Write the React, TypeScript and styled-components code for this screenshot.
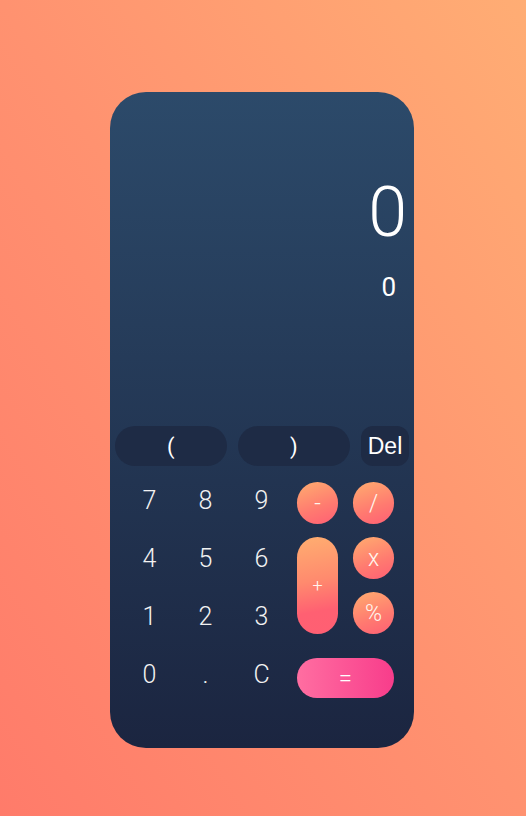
import React from "react";
import styled, { createGlobalStyle } from "styled-components";

const GlobalStyle = createGlobalStyle`
  html, body {
    margin: 0;
    padding: 0;
    height: 100%;
  }
  body {
    font-family: Roboto, "Liberation Sans", sans-serif;
    background: linear-gradient(to top right, #ff7b6a 0%, #ff9270 50%, #ffad74 100%);
  }
  #root {
    min-height: 100%;
  }
`;

const Page = styled.main`
  min-height: 816px;
  display: flex;
  justify-content: center;
  align-items: flex-start;
  padding-top: 92px;
  box-sizing: border-box;
`;

const Card = styled.div`
  width: 304px;
  height: 656px;
  margin-left: -2px;
  border-radius: 36px;
  background: linear-gradient(to bottom, #2c4a6a 0%, #1b2540 100%);
  display: flex;
  flex-direction: column;
  padding: 0 5px;
  box-sizing: border-box;
`;

const Display = styled.section`
  height: 334px;
  display: flex;
  flex-direction: column;
  align-items: flex-end;
  padding-top: 80px;
  box-sizing: border-box;
  color: #fff;
`;

const Result = styled.div`
  font-size: 70px;
  font-weight: 300;
  line-height: 80px;
  margin-right: 2px;
`;

const Expression = styled.div`
  font-size: 26px;
  font-weight: 400;
  line-height: 30px;
  margin-top: 20px;
  margin-right: 13px;
`;

const ParenRow = styled.div`
  display: flex;
  gap: 11.5px;
  height: 40px;
`;

const DarkButton = styled.button<{ $wide?: boolean }>`
  flex: ${(p) => (p.$wide ? "0 0 111.5px" : "0 0 48px")};
  height: 40px;
  border: none;
  border-radius: ${(p) => (p.$wide ? "20px" : "12px")};
  background: #1e2b45;
  color: #fff;
  font-family: ${(p) => (p.$wide ? "Roboto, sans-serif" : '"Liberation Sans", Arial, sans-serif')};
  font-weight: 400;
  font-size: ${(p) => (p.$wide ? "22px" : "23px")};
  padding: 0;
  display: flex;
  align-items: center;
  justify-content: center;
`;

const Keypad = styled.div`
  display: flex;
  gap: 15px;
  margin: 16px 0 0 14px;
`;

const DigitGrid = styled.div`
  display: grid;
  grid-template-columns: repeat(3, 41px);
  grid-auto-rows: 41px;
  column-gap: 15px;
  row-gap: 17px;
`;

const Digit = styled.button`
  border: none;
  background: transparent;
  color: #f2f2f2;
  font-family: Roboto, sans-serif;
  font-weight: 300;
  font-size: 25px;
  padding: 0;
  display: flex;
  align-items: center;
  justify-content: center;
  margin-top: -2px;
  height: 41px;
`;

const OpGrid = styled.div`
  display: grid;
  grid-template-columns: repeat(2, 41px);
  grid-template-rows: repeat(3, 42px) 40px;
  column-gap: 15px;
  row-gap: 13px;
`;

const Operator = styled.button<{ $tall?: boolean }>`
  border: none;
  padding: 0;
  width: 41px;
  border-radius: 20.5px;
  grid-row: ${(p) => (p.$tall ? "span 2" : "auto")};
  background: ${(p) =>
    p.$tall
      ? "linear-gradient(170deg, #ffae70 0%, #ff8a6e 45%, #ff6072 75%, #ff5f73 100%)"
      : "linear-gradient(160deg, #ffad6f 0%, #ff7a70 60%, #ff5f74 100%)"};
  color: #fff6ee;
  font-family: Roboto, sans-serif;
  font-weight: 300;
  font-size: ${(p) => (p.$tall ? "18px" : "23px")};
  display: flex;
  align-items: center;
  justify-content: center;
`;

const Equals = styled.button`
  grid-column: 1 / span 2;
  margin-top: 11px;
  height: 40px;
  border: none;
  border-radius: 20px;
  padding: 0;
  background: linear-gradient(to right, #ff6ea1 0%, #f83d8b 100%);
  color: #fff;
  font-family: Roboto, sans-serif;
  font-weight: 300;
  font-size: 24px;
  display: flex;
  align-items: center;
  justify-content: center;
`;

const digits = ["7", "8", "9", "4", "5", "6", "1", "2", "3", "0", ".", "C"];

export default function App() {
  return (
    <>
      <GlobalStyle />
      <Page>
        <Card>
          <Display>
            <Result>0</Result>
            <Expression>0</Expression>
          </Display>
          <ParenRow>
            <DarkButton $wide>(</DarkButton>
            <DarkButton $wide>)</DarkButton>
            <DarkButton>Del</DarkButton>
          </ParenRow>
          <Keypad>
            <DigitGrid>
              {digits.map((d) => (
                <Digit key={d}>{d}</Digit>
              ))}
            </DigitGrid>
            <OpGrid>
              <Operator>-</Operator>
              <Operator>/</Operator>
              <Operator $tall>+</Operator>
              <Operator>x</Operator>
              <Operator>%</Operator>
              <Equals>=</Equals>
            </OpGrid>
          </Keypad>
        </Card>
      </Page>
    </>
  );
}
